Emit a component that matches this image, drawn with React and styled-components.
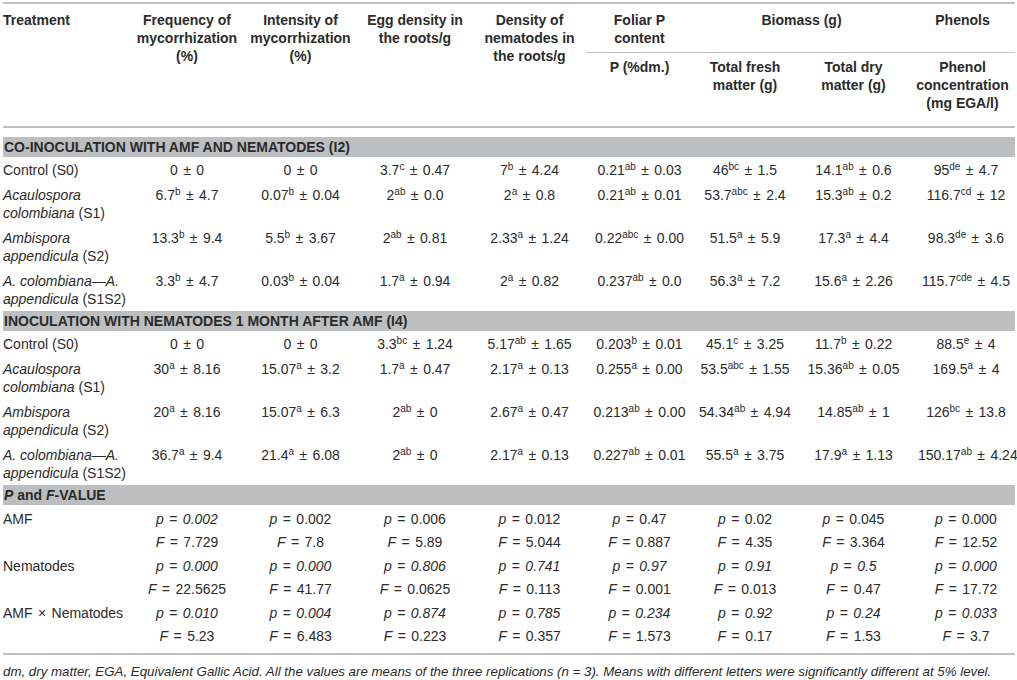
import React from 'react';
import styled, {createGlobalStyle} from 'styled-components';

const GlobalStyle = createGlobalStyle`
    body {
        margin: 0;
        background: #ffffff;
        font-family: 'Liberation Sans', Arial, sans-serif;
        color: #2b2b2b;
    }
`

const Page = styled.div`
    width: 1017px;
    padding: 2px 0 0 3px;
`

const Table = styled.table`
    width: 1012px;
    table-layout: fixed;
    border-collapse: collapse;
    font-size: 14px;
    line-height: 18px;
    border-top: 2px solid #bfc0c2;
    border-bottom: 2px solid #bfc0c2;
`

const Head = styled.th`
    vertical-align: top;
    text-align: ${props => props.$left ? 'left' : 'center'};
    font-weight: 700;
    padding: ${props => props.$second ? '5px 4px 14px' : '7px 4px 5px'};
    padding-left: ${props => props.$left ? '0' : '4px'};
    border-bottom: ${props => props.$line ? '1px solid #bfc0c2' : props.$bottom ? '2px solid #bfc0c2' : 'none'};
`

const BandCell = styled.td`
    padding: ${props => props.$gap}px 0 0;
`

const Band = styled.div`
    height: 20px;
    line-height: 20px;
    padding-left: 1px;
    background: #bcbec0;
    font-weight: 700;
`

const Cell = styled.td`
    vertical-align: top;
    white-space: ${props => props.$left ? 'normal' : 'nowrap'};
    text-align: ${props => props.$left ? 'left' : 'center'};
    padding: ${props => props.$tight ? '4.5px 1px 1px' : '4px 1px 3px'};
    padding-left: ${props => props.$left ? '0' : props.$shift ? '8px' : '1px'};
    padding-bottom: ${props => props.$last ? '8px' : props.$tight ? '1px' : '3px'};
`

const Sup = styled.sup`
    font-size: 10px;
    line-height: 0;
    vertical-align: 5px;
`

// math operators (± and =) get extra side spacing, as in the typeset table
const Op = styled.span`
    margin: 0 1.5px;
`

const Em = styled.i`
    font-style: italic;
`

const Note = styled.p`
    margin: 9px 0 0;
    font-size: 13.3px;
    line-height: 16px;
    font-style: italic;
`

const section1 = [
    {name: 'control', vals: [['0', '', '0'], ['0', '', '0'], ['3.7', 'c', '0.47'], ['7', 'b', '4.24'], ['0.21', 'ab', '0.03'], ['46', 'bc', '1.5'], ['14.1', 'ab', '0.6'], ['95', 'de', '4.7']]},
    {name: 'aca', vals: [['6.7', 'b', '4.7'], ['0.07', 'b', '0.04'], ['2', 'ab', '0.0'], ['2', 'a', '0.8'], ['0.21', 'ab', '0.01'], ['53.7', 'abc', '2.4'], ['15.3', 'ab', '0.2'], ['116.7', 'cd', '12']]},
    {name: 'amb', vals: [['13.3', 'b', '9.4'], ['5.5', 'b', '3.67'], ['2', 'ab', '0.81'], ['2.33', 'a', '1.24'], ['0.22', 'abc', '0.00'], ['51.5', 'a', '5.9'], ['17.3', 'a', '4.4'], ['98.3', 'de', '3.6']]},
    {name: 'mix', vals: [['3.3', 'b', '4.7'], ['0.03', 'b', '0.04'], ['1.7', 'a', '0.94'], ['2', 'a', '0.82'], ['0.237', 'ab', '0.0'], ['56.3', 'a', '7.2'], ['15.6', 'a', '2.26'], ['115.7', 'cde', '4.5']]},
];

const section2 = [
    {name: 'control', vals: [['0', '', '0'], ['0', '', '0'], ['3.3', 'bc', '1.24'], ['5.17', 'ab', '1.65'], ['0.203', 'b', '0.01'], ['45.1', 'c', '3.25'], ['11.7', 'b', '0.22'], ['88.5', 'e', '4']]},
    {name: 'aca', vals: [['30', 'a', '8.16'], ['15.07', 'a', '3.2'], ['1.7', 'a', '0.47'], ['2.17', 'a', '0.13'], ['0.255', 'a', '0.00'], ['53.5', 'abc', '1.55'], ['15.36', 'ab', '0.05'], ['169.5', 'a', '4']]},
    {name: 'amb', vals: [['20', 'a', '8.16'], ['15.07', 'a', '6.3'], ['2', 'ab', '0'], ['2.67', 'a', '0.47'], ['0.213', 'ab', '0.00'], ['54.34', 'ab', '4.94'], ['14.85', 'ab', '1'], ['126', 'bc', '13.8']]},
    {name: 'mix', vals: [['36.7', 'a', '9.4'], ['21.4', 'a', '6.08'], ['2', 'ab', '0'], ['2.17', 'a', '0.13'], ['0.227', 'ab', '0.01'], ['55.5', 'a', '3.75'], ['17.9', 'a', '1.13'], ['150.17', 'ab', '4.24']]},
];

// p rows: italic flags per value, F rows upright
const stats = [
    {label: 'AMF', p: ['0.002', '0.002', '0.006', '0.012', '0.47', '0.02', '0.045', '0.000'], italic: [true, false, false, false, false, false, false, false],
        f: ['7.729', '7.8', '5.89', '5.044', '0.887', '4.35', '3.364', '12.52']},
    {label: 'Nematodes', p: ['0.000', '0.000', '0.806', '0.741', '0.97', '0.91', '0.5', '0.000'], italic: [true, true, true, true, true, true, true, true],
        f: ['22.5625', '41.77', '0.0625', '0.113', '0.001', '0.013', '0.47', '17.72']},
    {label: <>AMF<Op> × </Op>Nematodes</>, p: ['0.010', '0.004', '0.874', '0.785', '0.234', '0.92', '0.24', '0.033'], italic: [true, true, true, true, true, true, true, true],
        f: ['5.23', '6.483', '0.223', '0.357', '1.573', '0.17', '1.53', '3.7']},
];

const treatments = {
    control: <>Control (S0)</>,
    aca: <><Em>Acaulospora</Em><br /><Em>colombiana</Em> (S1)</>,
    amb: <><Em>Ambispora</Em><br /><Em>appendicula</Em> (S2)</>,
    mix: <><Em>A. colombiana—A.</Em><br /><Em>appendicula</Em> (S1S2)</>,
};

const Value = ({v}) => (
    <>{v[0]}{v[1] && <Sup>{v[1]}</Sup>}<Op> ± </Op>{v[2]}</>
);

const DataRows = ({rows}) => rows.map(row => (
    <tr key={row.name}>
        <Cell $left>{treatments[row.name]}</Cell>
        {row.vals.map((v, i) => (
            <Cell key={i} $shift={i === 7}><Value v={v} /></Cell>
        ))}
    </tr>
));

const widths = [127, 114, 113, 116, 113, 107, 104, 113, 105];

const App = () => {
    return (
        <Page>
            <GlobalStyle />
            <Table>
                <colgroup>
                    {widths.map((w, i) => <col key={i} style={{width: w}} />)}
                </colgroup>
                <thead>
                    <tr>
                        <Head rowSpan={2} $left $bottom>Treatment</Head>
                        <Head rowSpan={2} $bottom>Frequency of<br />mycorrhization<br />(%)</Head>
                        <Head rowSpan={2} $bottom>Intensity of<br />mycorrhization<br />(%)</Head>
                        <Head rowSpan={2} $bottom>Egg density in<br />the roots/g</Head>
                        <Head rowSpan={2} $bottom>Density of<br />nematodes in<br />the roots/g</Head>
                        <Head $line>Foliar P<br />content</Head>
                        <Head colSpan={2} $line>Biomass (g)</Head>
                        <Head $line>Phenols</Head>
                    </tr>
                    <tr>
                        <Head $second $bottom>P (%dm.)</Head>
                        <Head $second $bottom>Total fresh<br />matter (g)</Head>
                        <Head $second $bottom>Total dry<br />matter (g)</Head>
                        <Head $second $bottom>Phenol<br />concentration<br />(mg EGA/l)</Head>
                    </tr>
                </thead>
                <tbody>
                    <tr>
                        <BandCell colSpan={9} $gap={9}><Band>CO-INOCULATION WITH AMF AND NEMATODES (I2)</Band></BandCell>
                    </tr>
                    <DataRows rows={section1} />
                    <tr>
                        <BandCell colSpan={9} $gap={0}><Band>INOCULATION WITH NEMATODES 1 MONTH AFTER AMF (I4)</Band></BandCell>
                    </tr>
                    <DataRows rows={section2} />
                    <tr>
                        <BandCell colSpan={9} $gap={0}><Band><Em>P</Em> and <Em>F</Em>-VALUE</Band></BandCell>
                    </tr>
                    {stats.map((s, si) => (
                        <React.Fragment key={si}>
                            <tr>
                                <Cell $left $tight>{s.label}</Cell>
                                {s.p.map((p, i) => (
                                    <Cell key={i} $tight $shift={i === 7}>
                                        <Em>p</Em><Op> = </Op>{s.italic[i] ? <Em>{p}</Em> : p}
                                    </Cell>
                                ))}
                            </tr>
                            <tr>
                                <Cell $left $tight $last={si === 2}></Cell>
                                {s.f.map((f, i) => (
                                    <Cell key={i} $tight $shift={i === 7} $last={si === 2}>
                                        <Em>F</Em><Op> = </Op>{f}
                                    </Cell>
                                ))}
                            </tr>
                        </React.Fragment>
                    ))}
                </tbody>
            </Table>
            <Note>
                dm, dry matter, EGA, Equivalent Gallic Acid. All the values are means of the three replications (n = 3). Means with different letters were significantly different at 5% level.
            </Note>
        </Page>
    );
};

export default App;
